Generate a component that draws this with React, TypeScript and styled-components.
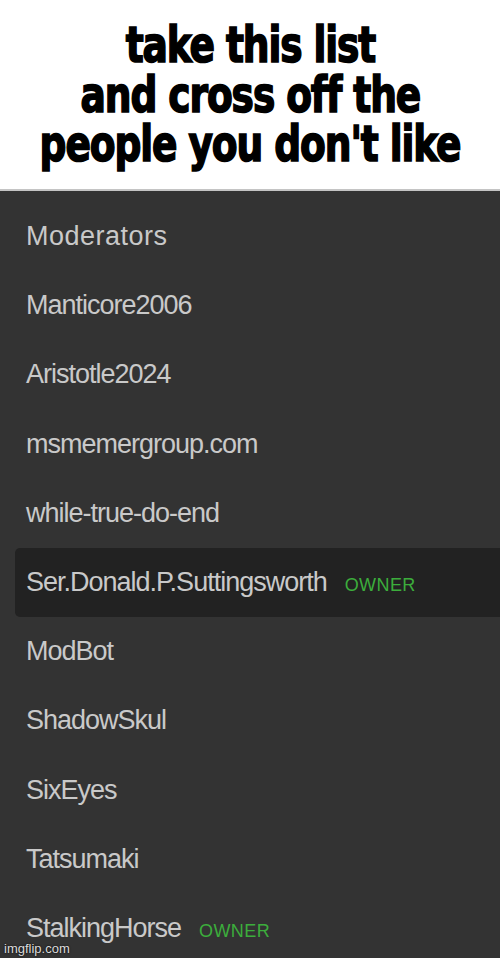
import React from "react";
import styled, { createGlobalStyle } from "styled-components";

const Global = createGlobalStyle`
  html, body { margin: 0; padding: 0; background: #333333; }
  #root { width: 500px; height: 958px; overflow: hidden; }
`;

const Page = styled.div`
  position: relative;
  width: 500px;
  height: 958px;
  display: flex;
  flex-direction: column;
  background: #333333;
  overflow: hidden;
`;

const Header = styled.div`
  flex-shrink: 0;
  height: 191px;
  background: #ffffff;
  border-bottom: 2px solid #c4c4c4;
  display: flex;
  flex-direction: column;
  align-items: center;
  padding-top: 21px;
  box-sizing: border-box;
`;

const TitleLine = styled.div`
  font-family: "DejaVu Sans Condensed", "DejaVu Sans", sans-serif;
  font-weight: 700;
  font-size: 50px;
  line-height: 49.5px;
  height: 49.5px;
  color: #000;
  -webkit-text-stroke: 1.6px #000;
  letter-spacing: -1.3px;
  white-space: nowrap;
  transform: scaleX(0.835);
`;

const List = styled.div`
  flex-shrink: 0;
  display: flex;
  flex-direction: column;
  padding-top: 11px;
`;

const Row = styled.div<{ $active?: boolean }>`
  flex-shrink: 0;
  height: 69.2px;
  margin-left: 15px;
  padding-left: 11px;
  display: flex;
  align-items: baseline;
  align-content: center;
  flex-wrap: wrap;
  background: ${(p) => (p.$active ? "#222222" : "transparent")};
  border-radius: 5px 0 0 5px;
  box-sizing: border-box;
`;

const Name = styled.span<{ $header?: boolean }>`
  font-family: "Liberation Sans", Arial, sans-serif;
  font-size: 27px;
  line-height: 1;
  color: #c9c9c9;
  letter-spacing: ${(p) => (p.$header ? "0.5px" : "-1px")};
`;

const Badge = styled.span`
  font-family: "Liberation Sans", Arial, sans-serif;
  font-size: 18px;
  line-height: 1;
  color: #3cad3c;
  margin-left: 18px;
  letter-spacing: 0.4px;
`;

const Watermark = styled.div`
  position: absolute;
  left: 4px;
  bottom: 3px;
  font-family: "Liberation Sans", Arial, sans-serif;
  font-size: 13px;
  line-height: 13px;
  color: #dcdcdc;
  text-shadow: 0 0 2px #000;
`;

const people: { name: string; owner?: boolean; active?: boolean }[] = [
  { name: "Manticore2006" },
  { name: "Aristotle2024" },
  { name: "msmemergroup.com" },
  { name: "while-true-do-end" },
  { name: "Ser.Donald.P.Suttingsworth", owner: true, active: true },
  { name: "ModBot" },
  { name: "ShadowSkul" },
  { name: "SixEyes" },
  { name: "Tatsumaki" },
  { name: "StalkingHorse", owner: true },
];

export default function App() {
  return (
    <Page>
      <Global />
      <Header>
        <TitleLine>take this list</TitleLine>
        <TitleLine>and cross off the</TitleLine>
        <TitleLine>people you don't like</TitleLine>
      </Header>
      <List>
        <Row>
          <Name $header>Moderators</Name>
        </Row>
        {people.map((p) => (
          <Row key={p.name} $active={p.active}>
            <Name>{p.name}</Name>
            {p.owner && <Badge>OWNER</Badge>}
          </Row>
        ))}
      </List>
      <Watermark>imgflip.com</Watermark>
    </Page>
  );
}
